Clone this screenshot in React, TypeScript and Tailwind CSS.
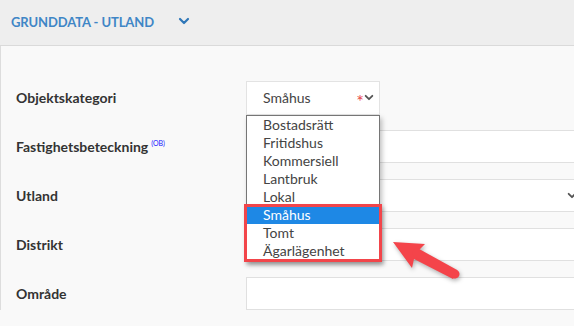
import React from 'react';

const options = ['Bostadsrätt', 'Fritidshus', 'Kommersiell', 'Lantbruk', 'Lokal', 'Småhus', 'Tomt', 'Ägarlägenhet'];

function Chevron({ className }: { className?: string }) {
    return (
        <svg className={className} viewBox="0 0 12 8" fill="none" stroke="currentColor" strokeWidth="2.2" strokeLinecap="round" strokeLinejoin="round">
            <path d="M2 2l4 4 4-4" />
        </svg>
    );
}

export default function App() {
    return (
        <div className="w-[574px] h-[326px] overflow-hidden bg-[#f9f9f9] font-['Lato',sans-serif] text-[#333]">
            <div className="h-[46px] flex items-center bg-[#eeeeee] border-b border-[#dadada] pl-[11px]">
                <span className="text-[13px] font-bold text-[#3f86c6] tracking-[-0.1px]">GRUNDDATA - UTLAND</span>
                <Chevron className="w-[12px] h-[8px] ml-[24px] mb-[4px] text-[#2f77b8]" />
            </div>

            <div className="relative border-l border-[#dddddd] pt-[35px] flex flex-col gap-[16px]">
                {/* Objektskategori */}
                <div className="flex items-center h-[33px]">
                    <label className="w-[245px] pl-[15px] text-[14px] font-bold">Objektskategori</label>
                    <div className="relative">
                        <div className="w-[134px] h-[34px] bg-white border border-[#e3e3e3] flex items-center pl-[16px] pr-[4px] text-[14px] text-[#444]">
                            <span className="flex-1">Småhus</span>
                            <span className="text-[#e8474c] text-[18px] leading-none mt-[7px]">*</span>
                            <Chevron className="w-[10px] h-[7px] text-[#555] mr-[1px]" />
                        </div>
                        <div className="absolute left-0 top-[34px] w-[134px] bg-white border border-[#767676] shadow-[2px_3px_5px_rgba(0,0,0,0.25)] z-10">
                            {options.map((o) => (
                                <div
                                    key={o}
                                    className={
                                        o === 'Småhus'
                                            ? 'h-[18px] leading-[18px] pl-[16px] text-[14px] bg-[#1e88e5] text-white'
                                            : 'h-[18px] leading-[18px] pl-[16px] text-[14px] text-[#444]'
                                    }
                                >
                                    {o}
                                </div>
                            ))}
                            <div className="absolute left-[-3px] top-[88px] w-[138px] h-[58px] border-[3px] border-[#f2454a] shadow-[2px_3px_4px_rgba(0,0,0,0.25)]" />
                        </div>
                    </div>
                </div>

                <div className="flex items-center h-[33px]">
                    <label className="w-[245px] pl-[15px] text-[14px] font-bold">
                        Fastighetsbeteckning
                        <span className="ml-[3px] text-[7px] font-normal text-[#1515ff] relative top-[-6px]">(OB)</span>
                    </label>
                    <div className="flex-1 h-[33px] bg-white border border-r-0 border-[#e0e0e0]" />
                </div>

                <div className="flex items-center h-[33px]">
                    <label className="w-[245px] pl-[15px] text-[14px] font-bold">Utland</label>
                    <div className="flex-1 h-[33px] bg-white border border-r-0 border-[#e0e0e0] flex items-center justify-end">
                        <Chevron className="w-[10px] h-[7px] text-[#555] mr-[-3px]" />
                    </div>
                </div>

                <div className="flex items-center h-[33px]">
                    <label className="w-[245px] pl-[15px] text-[14px] font-bold">Distrikt</label>
                    <div className="flex-1 h-[33px] bg-white border border-r-0 border-[#e0e0e0]" />
                </div>

                <div className="flex items-center h-[33px]">
                    <label className="w-[245px] pl-[15px] text-[14px] font-bold">Område</label>
                    <div className="flex-1 h-[33px] bg-white border border-r-0 border-[#e0e0e0]" />
                </div>

                {/* red pointer arrow */}
                <svg className="absolute left-[386px] top-[191px] z-20 drop-shadow-[1px_2px_2px_rgba(0,0,0,0.3)]" width="76" height="46" viewBox="0 0 76 46">
                    <path d="M6 5 L38 7 L31 14 L70 34 L66 42 L27 22 L25 31 Z" fill="#f4444a" />
                    <path d="M30 16 L68 37" stroke="#f4444a" strokeWidth="9" strokeLinecap="round" />
                </svg>
            </div>
        </div>
    );
}
